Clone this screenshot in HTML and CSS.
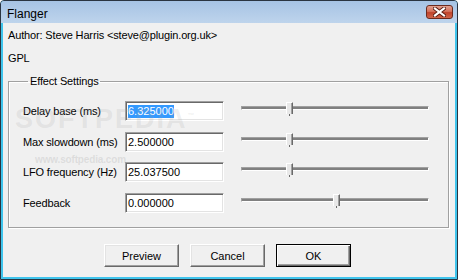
FILE: index.html
```html
<!DOCTYPE html>
<html lang="en">
<head>
    <meta charset="UTF-8">
    <title>Flanger</title>
    <link rel="stylesheet" href="styles.css">
</head>
<body>
    <div class="window">
        <div class="titlebar">
            <span class="title">Flanger</span>
            <div class="close-btn">
                <svg width="13" height="10" viewBox="0 0 13 10">
                    <path d="M2 1.5 L11 8.5 M11 1.5 L2 8.5" stroke="#5a1d12" stroke-width="4" stroke-linecap="square"/>
                    <path d="M2 1.5 L11 8.5 M11 1.5 L2 8.5" stroke="#ffffff" stroke-width="2.2" stroke-linecap="square"/>
                </svg>
            </div>
        </div>
        <div class="client">
            <p class="info">Author: Steve Harris &lt;steve@plugin.org.uk&gt;</p>
            <p class="info gpl">GPL</p>
            <fieldset class="group">
                <legend>Effect Settings</legend>
                <div class="rows">
                    <label>Delay base (ms)</label>
                    <div class="field"><span class="sel">6.325000</span></div>
                    <div class="slider"><div class="track"></div><div class="thumb" style="left: 45px"></div></div>

                    <label>Max slowdown (ms)</label>
                    <div class="field">2.500000</div>
                    <div class="slider"><div class="track"></div><div class="thumb" style="left: 45px"></div></div>

                    <label>LFO frequency (Hz)</label>
                    <div class="field">25.037500</div>
                    <div class="slider"><div class="track"></div><div class="thumb" style="left: 45px"></div></div>

                    <label>Feedback</label>
                    <div class="field">0.000000</div>
                    <div class="slider"><div class="track"></div><div class="thumb" style="left: 92px"></div></div>
                </div>
            </fieldset>
            <div class="buttons">
                <button class="btn">Preview</button>
                <button class="btn">Cancel</button>
                <button class="btn default">OK</button>
            </div>
            <div class="watermark">SOFTPEDIA<sup>™</sup></div>
            <div class="watermark-url">www.softpedia.com</div>
        </div>
    </div>
</body>
</html>
```

FILE: styles.css
```css
body {
    margin: 0;
    padding: 0;
    font-family: 'Liberation Sans', Arial, sans-serif;
    font-size: 11px;
    letter-spacing: -0.15px;
    color: black;
    background: white;
}
.window {
    width: 458px;
    height: 280px;
    box-sizing: border-box;
    border: 1px solid #2a3440;
    border-radius: 4px 4px 0 0;
    background: #3fc4ec;
    display: flex;
    flex-direction: column;
    overflow: hidden;
}
.titlebar {
    height: 22px;
    flex-shrink: 0;
    background: linear-gradient(#a6c3e4, #bed4ec);
    display: flex;
    align-items: center;
    justify-content: space-between;
    padding: 0 4px 0 6px;
}
.title {
    font-size: 12px;
    letter-spacing: 0;
    color: black;
    margin-top: 4px;
}
.close-btn {
    width: 27px;
    height: 14px;
    box-sizing: border-box;
    margin-top: 0;
    border: 1px solid #6b2a1e;
    border-radius: 3px;
    background: linear-gradient(#e2a08f 0%, #d4725c 45%, #c0432b 55%, #d0644a 100%);
    display: flex;
    align-items: center;
    justify-content: center;
}
.client {
    flex: 1;
    margin: 0 2px 2px 2px;
    background: #f0f0f0;
    padding: 5px 6px 0 5px;
    position: relative;
    display: flex;
    flex-direction: column;
}
.info {
    margin: 0;
    line-height: 14px;
}
.gpl {
    margin-top: 9px;
}
.group {
    margin: 9px 0 0 0;
    padding: 13px 0 0 14px;
    height: 154px;
    box-sizing: border-box;
    border: 1px solid #a0a0a0;
    box-shadow: inset 1px 1px 0 #fff, 1px 1px 0 #fff;
    min-width: 0;
}
.group legend {
    padding: 0 2px;
    margin-left: 5px;
    line-height: 14px;
}
.rows {
    display: grid;
    grid-template-columns: 102px 99px 188px;
    column-gap: 0;
    row-gap: 10.7px;
}
.rows label {
    line-height: 20px;
}
.field {
    height: 20px;
    box-sizing: border-box;
    background: white;
    border: 1px solid;
    border-color: #a0a0a0 #fff #fff #a0a0a0;
    box-shadow: inset 1px 1px 0 #696969, inset -1px -1px 0 #e3e3e3;
    padding: 2px 0 0 2px;
    line-height: 14px;
    font-size: 11px;
    letter-spacing: 0;
}
.sel {
    background: #3399ff;
    color: white;
    padding-bottom: 1px;
}
.slider {
    position: relative;
    margin-left: 17px;
    width: 188px;
    height: 20px;
}
.track {
    margin-top: 5px;
    height: 4px;
    box-sizing: border-box;
    border-top: 1px solid #a0a0a0;
    border-left: 1px solid #a0a0a0;
    border-bottom: 1px solid #fff;
    border-right: 1px solid #fff;
    background: #808080;
}
.thumb {
    position: absolute;
    top: 1px;
    width: 7px;
    height: 12px;
    box-sizing: border-box;
    background: #e8e8e8;
    border-top: 1px solid #fff;
    border-left: 1px solid #fff;
    border-right: 1px solid #696969;
    box-shadow: inset -1px 0 0 #a0a0a0;
}
.thumb::after {
    content: "";
    position: absolute;
    left: 2px;
    top: 11px;
    width: 1px;
    height: 2px;
    background: #696969;
}
.buttons {
    display: flex;
    justify-content: center;
    gap: 11px;
    margin-top: 16px;
    padding-right: 2px;
}
.btn {
    width: 75px;
    height: 23px;
    box-sizing: border-box;
    font-family: 'Liberation Sans', Arial, sans-serif;
    font-size: 11px;
    color: black;
    background: #f0f0f0;
    border: 1px solid;
    border-color: #fff #696969 #696969 #fff;
    box-shadow: inset -1px -1px 0 #a0a0a0, inset 1px 1px 0 #e3e3e3;
    padding: 0;
}
.btn.default {
    border-color: #000;
    box-shadow: inset 1px 1px 0 #fff, inset -1px -1px 0 #696969, inset -2px -2px 0 #a0a0a0;
}
.watermark {
    position: absolute;
    left: 12px;
    top: 81px;
    font-size: 27px;
    font-weight: bold;
    letter-spacing: 2px;
    color: rgba(160, 160, 160, 0.18);
    pointer-events: none;
}
.watermark sup {
    font-size: 7px;
}
.watermark-url {
    position: absolute;
    left: 32px;
    top: 131px;
    font-size: 10px;
    font-weight: bold;
    color: rgba(160, 160, 160, 0.25);
    pointer-events: none;
}
```
